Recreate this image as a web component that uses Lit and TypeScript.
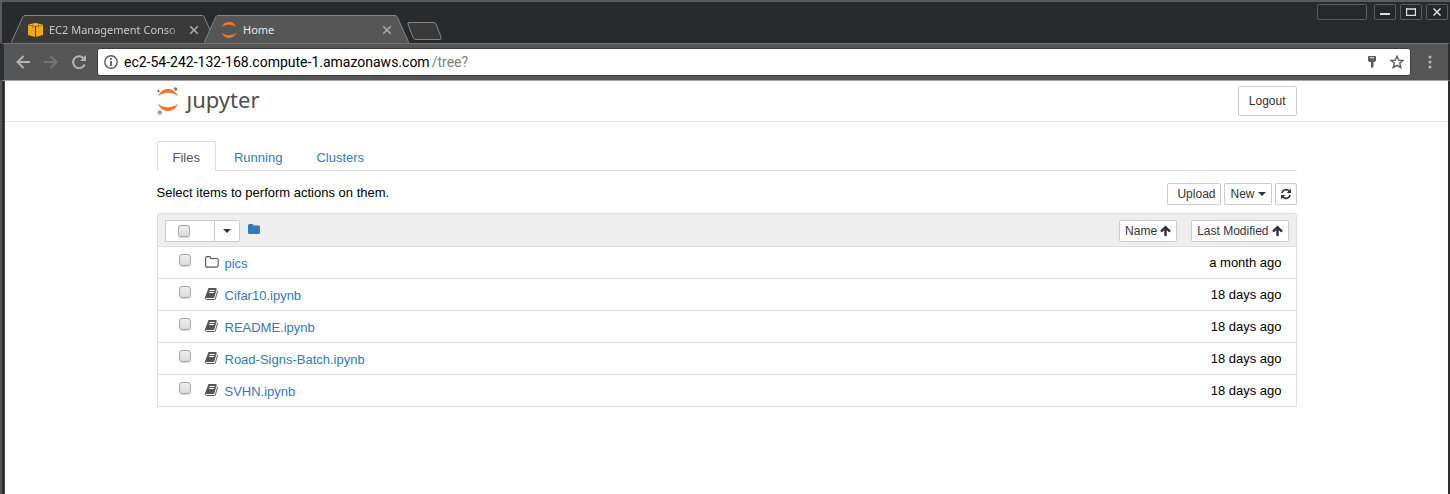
import { LitElement, html, css, svg } from "lit";
import { customElement, state } from "lit/decorators.js";

interface Item {
  name: string;
  kind: "folder" | "notebook";
  modified: string;
}

const ITEMS: Item[] = [
  { name: "pics", kind: "folder", modified: "a month ago" },
  { name: "Cifar10.ipynb", kind: "notebook", modified: "18 days ago" },
  { name: "README.ipynb", kind: "notebook", modified: "18 days ago" },
  { name: "Road-Signs-Batch.ipynb", kind: "notebook", modified: "18 days ago" },
  { name: "SVHN.ipynb", kind: "notebook", modified: "18 days ago" },
];

const moons = svg`
  <path fill="#f37726" d="M0 7.500C1.800 2.500 5.500 0 10 0S18.200 2.500 20 7.500C17.500 5 14 3.800 10 3.800S2.500 5 0 7.500Z"/>
  <path fill="#f37726" d="M0 14.500C1.800 19.500 5.500 22 10 22S18.200 19.500 20 14.500C17.500 17 14 18.200 10 18.200S2.500 17 0 14.500Z"/>`;

const closeIcon = html`<svg width="10" height="10" viewBox="0 0 10 10" aria-hidden="true">
  <path d="M1.200 1.200l7.600 7.600M8.800 1.200l-7.600 7.600" stroke="currentColor" stroke-width="1.600" fill="none"/></svg>`;

const arrowUp = html`<svg width="11" height="12" viewBox="0 0 11 12" aria-hidden="true">
  <path d="M5.500 2V11M1 6.700L5.500 2.200L10 6.700" stroke="currentColor" stroke-width="2.500" fill="none"/></svg>`;

const caret = html`<svg width="8" height="4" viewBox="0 0 8 4" aria-hidden="true"><path d="M0 0h8L4 4z" fill="currentColor"/></svg>`;

const openFolder = html`<svg width="14" height="12" viewBox="0 0 14 12" aria-hidden="true">
  <path d="M.6 2.200Q.6.600 2.200.600H4.300Q5.800.600 5.800 2.200V2.500H11.600Q13.200 2.500 13.200 4V9.600Q13.200 11.100 11.600 11.100H2.200Q.6 11.100.6 9.600Z" fill="none" stroke="currentColor" stroke-width="1.100"/></svg>`;

const book = html`<svg width="14" height="12" viewBox="0 0 1664 1536" preserveAspectRatio="xMinYMid meet" aria-hidden="true">
  <path fill="currentColor" d="M1639 350q40 57 18 129l-275 906q-19 64-76.500 107.500T1183 1536H260q-77 0-148.500-53.500T12 1351q-24-67-2-127 0-4 3-27t4-37q1-8-3-21.500t-3-19.500q2-11 8-21t16.500-23.500T52 1051q23-38 45-91.500t30-91.500q3-10 .5-30t-.5-28q3-11 17-28t17-23q21-36 42-92t25-90q1-9-2.500-32t.5-28q4-13 22-30.500t22-22.500q19-26 42.500-84.500T340 283q1-8-3-25.500t-2-26.500q2-8 9-18t18-23 17-21q8-12 16.500-30.500t15-35 16-36 19.500-32T469.500 12t36-11.500T553 6l-1 3q38-9 51-9h761q74 0 114 56t18 130l-274 906q-36 119-71.500 153.500T1022 1280H153q-27 0-38 15-11 16-1 43 24 70 144 70h923q29 0 56-15.500t35-41.500l300-987q7-22 5-57 38 15 59 43zm-1064 2q-4 13 2 22.500t20 9.500h608q13 0 25.500-9.500T1247 352l21-64q4-13-2-22.500t-20-9.500H638q-13 0-25.500 9.500T596 288zm-83 256q-4 13 2 22.500t20 9.500h608q13 0 25.500-9.500T1164 608l21-64q4-13-2-22.500t-20-9.500H555q-13 0-25.500 9.500T513 544z"/></svg>`;

@customElement("app-root")
export class AppRoot extends LitElement {
  @state() private tab = "Files";

  static styles = css`
    :host {
      display: block;
      min-height: 100vh;
      box-sizing: border-box;
      padding-left: 5px;
      background: linear-gradient(to right, #555 2px, #2a2d2f 2px 4px, #444 4px 5px, #fff 5px);
      border-right: 2px solid #2b2d2f;
      font: 13px/20px "Liberation Sans", Arial, sans-serif;
      color: #000;
    }
    * { box-sizing: border-box; }
    svg { display: block; flex: none; }
    button { font: inherit; margin: 0; cursor: pointer; }
    a { text-decoration: none; color: #337ab7; }

    .chrome {
      margin: 0 -2px 0 -5px;
      font-family: "Noto Sans", "Open Sans", sans-serif;
    }
    .titlebar {
      display: flex;
      align-items: flex-start;
      justify-content: space-between;
      height: 43px;
      background: #272b2e;
      border-top: 2px solid #5b5b5b;
      border-left: 2px solid #5b5b5b;
    }
    .strip { display: flex; padding: 13px 0 0 9px; }
    .tab {
      position: relative;
      display: flex;
      align-items: center;
      width: 205px;
      height: 28px;
      margin-right: -12px;
      padding: 2px 17px 0;
      font-size: 11px;
      line-height: 16px;
      color: #c9c9c9;
    }
    .tab.active { color: #e6e6e6; z-index: 1; }
    .shape { position: absolute; inset: 0; z-index: -1; width: 100%; height: 100%; }
    .tab.idle { z-index: 0; }
    .title { flex: 1; margin-left: 6px; white-space: nowrap; }
    .fade { mask-image: linear-gradient(to right, #000 84%, transparent 98%); }
    .x {
      display: flex;
      padding: 0;
      border: 0;
      background: none;
      color: #a9a9a9;
    }
    .newtab { padding: 0; border: 0; background: none; margin: 7px 0 0 10px; height: 18px; }
    .controls { display: flex; gap: 4px; padding: 2px 2px 0 0; }
    .controls button {
      display: grid;
      place-items: center;
      width: 22px;
      height: 16px;
      padding: 0;
      border: 1px solid #5c5f61;
      border-radius: 2px;
      background: #24282a;
      color: #e0e0e0;
    }
    .controls .blank { width: 50px; margin-right: 3px; }

    .toolbar {
      display: flex;
      align-items: center;
      height: 38px;
      padding: 0 16px 0 12px;
      background: #565656;
      border-style: solid;
      border-width: 1px 2px 1px 4px;
      border-color: #737373 #2b2d2f #a5a5a5 #2c2f31;
      color: #b4b4b4;
    }
    .nav {
      display: flex;
      padding: 0;
      margin-right: 14px;
      border: 0;
      background: none;
      color: inherit;
    }
    .nav.off { color: #767676; }
    .nav.reload { margin-right: 10px; }
    .omni {
      flex: 1;
      display: flex;
      align-items: center;
      height: 28px;
      padding: 0 6px;
      border: 1px solid #3d3d3d;
      border-radius: 3px;
      background: #fff;
      color: #5a5a5a;
    }
    .url {
      flex: 1;
      margin-left: 6px;
      font-family: Roboto, "Noto Sans", sans-serif;
      font-size: 14px;
      line-height: 20px;
      color: #000;
      white-space: nowrap;
    }
    .path { margin-left: 2px; color: #808080; }
    .key { margin-right: 14px; }
    .nav.menu { margin: 0 0 0 17px; }

    .wrap { max-width: 1140px; margin: 0 auto; }
    .head { border-bottom: 1px solid #e7e7e7; }
    .head .wrap {
      display: flex;
      align-items: center;
      justify-content: space-between;
      height: 40px;
    }
    .logo { display: flex; align-items: center; color: #4e4e4e; }
    .word {
      margin: 0 0 4px 8px;
      font: 22px/32px "Noto Sans", "Open Sans", sans-serif;
    }
    .j { display: inline-block; clip-path: inset(12px -4px 0 -4px); }
    .btn {
      display: flex;
      align-items: center;
      gap: 3px;
      height: 22px;
      padding: 0 5px;
      border: 1px solid #ccc;
      border-radius: 2px;
      background: #fff;
      color: #333;
      font-size: 12px;
      line-height: 18px;
      white-space: nowrap;
    }
    .btn.logout { height: 30px; padding: 0 10px; }
    .tabs {
      display: flex;
      margin-top: 19px;
      gap: 2px;
      border-bottom: 1px solid #ddd;
    }
    .tabs button {
      height: 30px;
      margin-bottom: -1px;
      padding: 4px 15px 0;
      border: 1px solid transparent;
      border-radius: 2px 2px 0 0;
      background: none;
      color: #337ab7;
    }
    .tabs button.on {
      border-color: #ddd #ddd #fff;
      background: #fff;
      color: #555;
    }
    .actions {
      display: flex;
      align-items: center;
      gap: 3px;
      margin: 12px 0 8px;
    }
    .hint { flex: 1; margin-bottom: 2px; }
    .upload { padding-left: 9px; }

    .list {
      width: 100%;
      border: 1px solid #ddd;
      border-radius: 2px;
      border-spacing: 0;
    }
    th { padding: 0; height: 32px; background: #eee; font-weight: normal; }
    .bar { display: flex; align-items: center; padding: 1px 7px 0; }
    .selector { display: flex; margin-right: 8px; }
    .all {
      display: flex;
      align-items: center;
      width: 50px;
      height: 22px;
      padding-left: 12px;
      border: 1px solid #ccc;
      background: #fff;
    }
    .drop { width: 26px; margin-left: -1px; padding: 0 8px; border-radius: 0 2px 2px 0; }
    .home { flex: 1; margin-bottom: 4px; }
    .sortname { margin-right: 14px; }
    input {
      appearance: none;
      display: block;
      flex: none;
      width: 12px;
      height: 12px;
      margin: 0;
      border: 1px solid #a5a5a5;
      border-radius: 3px;
      background: linear-gradient(#ededed, #dcdcdc);
      box-shadow: 0 1px 1px #ddd;
    }
    td { height: 32px; padding: 0; border-top: 1px solid #ddd; }
    .entry { display: flex; align-items: center; padding-left: 21px; color: #555; }
    .entry input { margin: 0 14px 5px 0; }
    .entry svg { margin-bottom: 2px; }
    .entry a { margin: 2px 0 0 6px; }
    .when { padding-right: 14px; text-align: right; }
  `;

  private browserTab(title: string, active: boolean) {
    return html`<div class="tab ${active ? "active" : "idle"}">
      <svg class="shape" viewBox="0 0 205 28" preserveAspectRatio="none" aria-hidden="true">
        <path d="M0 28L12 1.500Q12.500 .5 14 .5H191Q192.500 .5 193 1.500L205 28Z" fill=${active ? "#565656" : "#3a3a3a"}/>
        <path d="M0 28L12 1.500Q12.500 .5 14 .5H191Q192.500 .5 193 1.500L205 28" fill="none" stroke="#858585"/>
      </svg>
      ${active
        ? html`<svg width="16" height="16" viewBox="0 0 20 22" aria-hidden="true">${moons}</svg>`
        : html`<svg width="15" height="14" viewBox="0 0 15 14" aria-hidden="true">
            <path fill="#f2a81d" d="M0 2L7 3.500V14L0 12ZM8 3.500L15 2V12L8 14Z"/>
            <path fill="#fbc02d" d="M0 1.500L7.500 0L15 1.500L7.500 3Z"/>
            <path d="M4.500 1V5M10.500 1V5" stroke="#c47d12"/></svg>`}
      <span class="title ${active ? "" : "fade"}">${title}</span>
      <button class="x" aria-label="Close tab">${closeIcon}</button>
    </div>`;
  }

  render() {
    return html`
      <header class="chrome">
        <div class="titlebar">
          <div class="strip">
            ${this.browserTab("EC2 Management Conso", false)}
            ${this.browserTab("Home", true)}
            <button class="newtab" aria-label="New tab">
              <svg width="35" height="18" viewBox="0 0 35 18"><path d="M1 2Q.5.500 2 .5H26Q28 .5 29 2L34 15Q34.500 17.500 33 17.500H9Q7 17.500 6 15.500Z" fill="#3a3a3a" stroke="#858585"/></svg>
            </button>
          </div>
          <div class="controls">
            <button class="blank" aria-label="Account"></button>
            <button aria-label="Minimize"><svg width="10" height="8" viewBox="0 0 10 8"><path d="M0 6h10" stroke="currentColor" stroke-width="2"/></svg></button>
            <button aria-label="Maximize"><svg width="10" height="8" viewBox="0 0 10 8"><path d="M.5 0V7.500H9.500V0M0 1H10" stroke="currentColor" stroke-width="1.400" fill="none"/></svg></button>
            <button aria-label="Close"><svg width="8" height="8" viewBox="0 0 8 8"><path d="M.5.500l7 7M7.500.500l-7 7" stroke="currentColor" stroke-width="1.500"/></svg></button>
          </div>
        </div>
        <div class="toolbar">
          <button class="nav" aria-label="Back"><svg width="14" height="14" viewBox="0 0 14 14"><path d="M14 7H1.500M7.500 1L1.500 7L7.500 13" fill="none" stroke="currentColor" stroke-width="1.900"/></svg></button>
          <button class="nav off" aria-label="Forward"><svg width="14" height="14" viewBox="0 0 14 14"><path d="M0 7H12.500M6.500 1L12.500 7L6.500 13" fill="none" stroke="currentColor" stroke-width="1.900"/></svg></button>
          <button class="nav reload" aria-label="Reload"><svg width="15" height="14" viewBox="0 0 15 14"><path d="M12.700 9.500A6 6 0 1 1 11.500 3" fill="none" stroke="currentColor" stroke-width="2"/><path d="M14 0V6H8Z" fill="currentColor"/></svg></button>
          <div class="omni">
            <svg width="14" height="14" viewBox="0 0 14 14" aria-hidden="true"><circle cx="7" cy="7" r="6.200" fill="none" stroke="currentColor" stroke-width="1.400"/><path d="M7 3v1.800M7 6v5" stroke="currentColor" stroke-width="1.800"/></svg>
            <span class="url">ec2-54-242-132-168.compute-1.amazonaws.com<span class="path">/tree?</span></span>
            <svg class="key" width="8" height="12" viewBox="0 0 8 12" aria-hidden="true"><path d="M1 0H7Q8 0 8 1V4Q8 6 6 6H5.500V11L4 12L3 11V6H2Q0 6 0 4V1Q0 0 1 0Z" fill="currentColor"/><path d="M2 1.800H6" stroke="#fff"/></svg>
            <svg width="14" height="14" viewBox="0 0 14 14" aria-hidden="true"><path d="M7 1.200L8.700 5.200L13 5.500L9.700 8.300L10.800 12.600L7 10.300L3.200 12.600L4.300 8.300L1 5.500L5.300 5.200Z" fill="none" stroke="currentColor" stroke-width="1.400"/></svg>
          </div>
          <button class="nav menu" aria-label="Menu"><svg width="4" height="14" viewBox="0 0 4 14"><path d="M2 2h.01M2 7h.01M2 12h.01" stroke="currentColor" stroke-width="3.200" stroke-linecap="round"/></svg></button>
        </div>
      </header>
      <div class="head"><div class="wrap">
        <a class="logo" href="#">
          <svg width="22" height="28" viewBox="0 0 22 28" aria-hidden="true">
            <g transform="translate(1 2)">${moons}</g>
            <circle cx="18.700" cy="2" r="1.700" fill="#767677"/><circle cx="1.500" cy="4.200" r="1.100" fill="#616262"/><circle cx="2.800" cy="25.500" r="2.200" fill="#9e9e9e"/>
          </svg>
          <span class="word"><span class="j">j</span>upyter</span>
        </a>
        <button class="btn logout">Logout</button>
      </div></div>
      <main class="wrap">
        <nav class="tabs">
          ${["Files", "Running", "Clusters"].map(
            (t) => html`<button class=${this.tab === t ? "on" : ""} @click=${() => (this.tab = t)}>${t}</button>`
          )}
        </nav>
        <div class="actions">
          <span class="hint">Select items to perform actions on them.</span>
          <button class="btn upload">Upload</button>
          <button class="btn">New ${caret}</button>
          <button class="btn" aria-label="Refresh">
            <svg width="10" height="12" viewBox="0 0 10 12"><path d="M.9 5A4.200 4.200 0 0 1 8.300 3.200M9.100 7A4.200 4.200 0 0 1 1.700 8.800" fill="none" stroke="currentColor" stroke-width="1.700"/><path d="M10 .8V5H5.800ZM0 11.200V7H4.200Z" fill="currentColor"/></svg>
          </button>
        </div>
        <table class="list">
          <thead><tr><th colspan="2"><div class="bar">
            <div class="selector">
              <label class="all"><input type="checkbox" aria-label="Select all" /></label>
              <button class="btn drop" aria-label="Select by kind">${caret}</button>
            </div>
            <a class="home" href="#" aria-label="Home folder"><svg width="12" height="10" viewBox="0 0 12 10"><path d="M0 1.500Q0 0 1.500 0H4Q5.500 0 5.500 1.500H10.500Q12 1.500 12 3V8.500Q12 10 10.500 10H1.500Q0 10 0 8.500Z" fill="currentColor"/></svg></a>
            <button class="btn sortname">Name ${arrowUp}</button>
            <button class="btn">Last Modified ${arrowUp}</button>
          </div></th></tr></thead>
          <tbody>
            ${ITEMS.map(
              (i) => html`<tr>
                <td><div class="entry">
                  <input type="checkbox" aria-label=${i.name} />
                  ${i.kind === "folder" ? openFolder : book}
                  <a href="#">${i.name}</a>
                </div></td>
                <td class="when">${i.modified}</td>
              </tr>`
            )}
          </tbody>
        </table>
      </main>
    `;
  }
}
